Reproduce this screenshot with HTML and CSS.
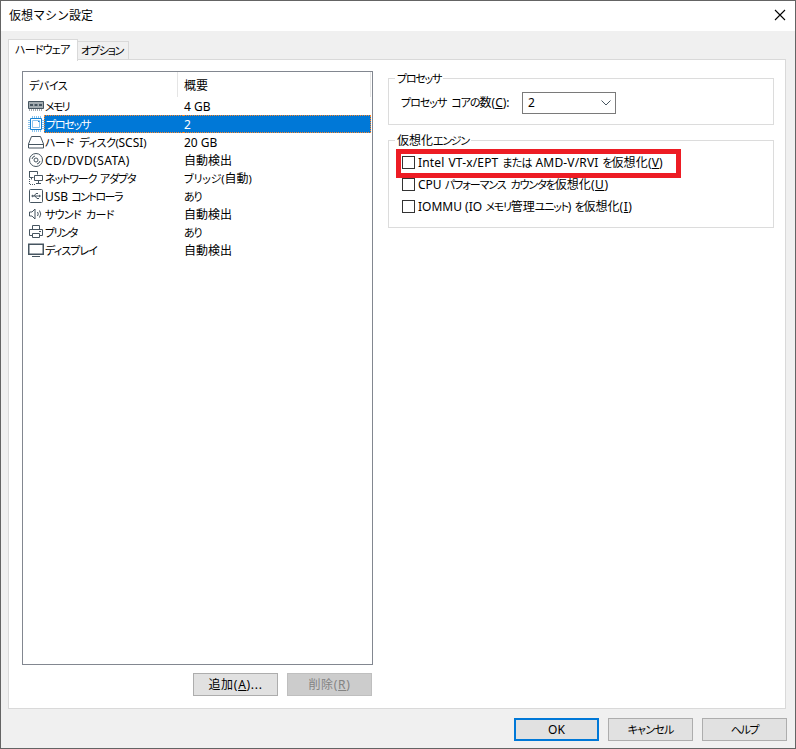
FILE: index.html
```html
<!DOCTYPE html>
<html lang="ja">
<head>
<meta charset="utf-8">
<title>仮想マシン設定</title>
<link rel="stylesheet" href="styles.css">
</head>
<body>
<div class="window">
  <header class="titlebar"><h1 class="title">仮想マシン設定</h1>
    <svg class="close" width="12" height="12" viewBox="0 0 12 12"><path d="M1 1L11 11M11 1L1 11"/></svg>
  </header>
  <nav class="tabs"><div class="tab active kana wide">ハードウェア</div><div class="tab kana">オプション</div></nav>
  <main class="panel">
    <section class="devices">
      <div class="list">
        <div class="head"><span class="kana airy">デバイス</span><span class="summary-head">概要</span></div>
        <div class="row"><svg class="icon" viewBox="0 0 16 16"><path class="fill" d="M.5 3.500h15v7H.5z"/><path class="chip" d="M2 6h3v2H2zM6.500 6h3v2h-3zM11 6h3v2h-3z"/><path class="dash" d="M1 12h14"/></svg><span class="name kana tight">メモリ</span><span class="value">4 GB</span></div>
        <div class="row selected"><svg class="icon cpu" viewBox="0 0 16 16"><path d="M2.500 2.500h11v11h-11z"/><path class="pins" d="M4.500 0v2M6.500 0v2M8.500 0v2M10.500 0v2M12.500 0v2M4.500 14v2M6.500 14v2M8.500 14v2M10.500 14v2M12.500 14v2M0 4.500h2M0 6.500h2M0 8.500h2M0 10.500h2M0 12.500h2M14 4.500h2M14 6.500h2M14 8.500h2M14 10.500h2M14 12.500h2M4.500 4.500h7v7h-7z"/><path d="M10 5.500h1.500"/></svg><span class="name kana">プロセッサ</span><span class="value">2</span></div>
        <div class="row"><svg class="icon" viewBox="0 0 16 16"><path d="M3.500 2.500h9l3 7.500v4H.5v-4zM.5 10.500h15"/></svg><span class="name kana disk">ハード ディスク(<i>SCSI</i>)</span><span class="value">20 GB</span></div>
        <div class="row"><svg class="icon" viewBox="0 0 16 16"><circle cx="8" cy="8" r="6.500"/><circle cx="8" cy="8" r="2"/><path d="M4 7a4 4 0 0 1 3-3M12 9a4 4 0 0 1-3 3"/></svg><span class="name sata">CD/DVD(SATA)</span><span class="value">自動検出</span></div>
        <div class="row"><svg class="icon" viewBox="0 0 16 16"><path d="M1.500 1.500h8v3M1.500 1v6.500h4M3.500 7.500v2M6.500 5.500h8v5h-8zM10.500 11v3M8 13.500h5"/><path class="dash" d="M1.500 9v5.500h6"/></svg><span class="name kana net">ネットワーク アダプタ</span><span class="value kana bridge">ブリッジ(<b>自動</b>)</span></div>
        <div class="row"><svg class="icon" viewBox="0 0 16 16"><rect x="1.500" y="1.500" width="13" height="13" rx="1"/><path d="M4 8h8M6 8l2-2.500h2M7 8l2 2.500h2M11 7l1.500 1-1.500 1"/><circle cx="4.500" cy="8" r=".7"/></svg><span class="name usb">USB <span class="kana">コントローラ</span></span><span class="value kana">あり</span></div>
        <div class="row"><svg class="icon" viewBox="0 0 16 16"><path d="M1.500 6v4h2.500l3 3V3L4 6zM9.500 6q1.500 2 0 4M11.500 4.500q2.500 3.500 0 7"/></svg><span class="name kana sound">サウンド カード</span><span class="value">自動検出</span></div>
        <div class="row"><svg class="icon" viewBox="0 0 16 16"><path d="M4.500 5V1.500h7V5M4 11.500H1.500v-6h13v6H12M4.500 9.500h7v4h-7zM11 7.500h2"/></svg><span class="name kana tight">プリンタ</span><span class="value kana">あり</span></div>
        <div class="row"><svg class="icon" viewBox="0 0 16 16"><path d="M.75 2.250h14.500v10H.75z" stroke-width="1.500"/><path d="M4 14.500h8"/></svg><span class="name kana display">ディスプレイ</span><span class="value">自動検出</span></div>
      </div>
      <div class="list-actions"><button class="add">追加(<u>A</u>)...</button><button disabled>削除(<u>R</u>)</button></div>
    </section>
    <section class="settings">
      <div class="group processors"><h2 class="legend kana">プロセッサ</h2>
        <label class="cores"><span class="kana core-name">プロセッサ コアの</span>数(<u>C</u>):</label>
        <div class="combo">2<svg width="10" height="6" viewBox="0 0 10 6"><path d="M.5.500L5 5 9.500.500"/></svg></div>
      </div>
      <div class="group engine"><h2 class="legend">仮想化<span class="kana">エンジン</span></h2>
        <div class="highlight"></div>
        <div class="check"><span class="box"></span><span class="vtx">Intel VT-x/EPT <span class="kana wide">または</span> AMD-V/RVI <span class="kana">を</span>仮想化(<u>V</u>)</span></div>
        <div class="check"><span class="box"></span><span>CPU <span class="kana counter">パフォーマンス カウンタを</span>仮想化<span class="mnemonic">(<u>U</u>)</span></span></div>
        <div class="check"><span class="box"></span><span class="iommu">IOMMU (IO <span class="kana tight">メモリ</span>管理<span class="kana">ユニット</span>) <span class="kana">を</span>仮想化<span class="mnemonic">(<u>I</u>)</span></span></div>
      </div>
    </section>
  </main>
  <footer class="footer"><button class="default">OK</button><button class="kana wide">キャンセル</button><button class="kana">ヘルプ</button></footer>
</div>
</body>
</html>
```
FILE: styles.css
```css
* { box-sizing: border-box; }
body { margin: 0; background: #fff; color: #000; font: 12px/18px "Noto Sans", "Noto Sans CJK JP", sans-serif; white-space: nowrap; }
h1, h2 { margin: 0; font: inherit; }
i, b { font-style: normal; font-weight: normal; font-size: 12px; letter-spacing: 0; }
svg { fill: none; stroke: #465560; flex: none; }
.kana { font-feature-settings: "palt"; font-size: 11px; letter-spacing: -1.25px; }
.wide { letter-spacing: -.8px; }
.airy { letter-spacing: -.4px; }
.tight { letter-spacing: -1.7px; }
.disk { letter-spacing: -.4px; word-spacing: 3px; }
.net { letter-spacing: -1.15px; word-spacing: 2px; }
.sound { letter-spacing: -.7px; word-spacing: 3px; }
.core-name { letter-spacing: -1px; word-spacing: 3px; }
.display { letter-spacing: -.9px; }
.bridge { letter-spacing: -.2px; }
.usb .kana { letter-spacing: -1.5px; }
.counter { letter-spacing: -1.05px; word-spacing: 3px; }
.sata { letter-spacing: .45px; }
.vtx { letter-spacing: .17px; word-spacing: .6px; }
.iommu .tight { letter-spacing: -1.2px; }
.mnemonic { letter-spacing: .6px; }
.window { width: 796px; height: 749px; border: 1px solid #646464; background: #f0f0f0; display: flex; flex-direction: column; }
.titlebar { height: 30px; flex: none; background: #fff; display: flex; justify-content: space-between; align-items: center; padding: 0 9px 2px 8px; }
.title { padding-top: 2px; }
.close { stroke: #000; stroke-width: 1.1; }
.tabs { height: 29px; flex: none; margin: 0 7px; padding-top: 7px; display: flex; align-items: flex-end; z-index: 1; }
.tab { height: 19px; width: 51px; border: 1px solid #d9d9d9; border-bottom: 0; border-left: 0; padding-left: 3px; line-height: 18px; }
.tab.active { width: 70px; height: 22px; background: #fff; border-left: 1px solid #d9d9d9; padding-left: 6px; margin-bottom: -1px; line-height: 19px; }
.panel { width: 778px; height: 650px; margin: -1px 0 0 7px; border: 1px solid #d9d9d9; background: #fff; flex: none; display: flex; padding: 11px 11px 0 13px; gap: 15px; }
.devices { width: 351px; }
.list { height: 594px; border: 1px solid #828790; padding: 0 1px; }
.head { display: flex; height: 25px; border-right: 1px solid #e5e5e5; padding-left: 5px; line-height: 28px; }
.head .kana { width: 149px; border-right: 1px solid #e5e5e5; }
.summary-head { padding-left: 6px; }
.row { display: flex; height: 18px; line-height: 20px; padding-left: 4px; }
.icon { width: 16px; height: 16px; margin-top: 1px; }
.dash { stroke-dasharray: 1 1; }
.fill { fill: #a4adb2; }
.chip { fill: #465560; stroke: none; }
.cpu { stroke: #1683d3; }
.pins { stroke: #8cc4ed; }
.name { width: 139px; padding-left: 1px; flex: none; }
.value { flex: 1; padding-left: 1px; }
.selected .name, .selected .value { background: #0078d7; color: #fff; border: 1px dotted #ff8728; line-height: 18px; }
.selected .name { padding-left: 1px; border-right: 0; }
.selected .value { border-left: 0; }
.list-actions { display: flex; gap: 9px; justify-content: flex-end; margin: 8px 1px 0 0; }
.list-actions button { letter-spacing: .7px; }
button { width: 85px; height: 23px; padding: 0; border: 1px solid #adadad; background: #e1e1e1; color: #000; font: inherit; }
button.kana { font-size: 11px; }
button:disabled { color: #838383; background: #ccc; border-color: #bfbfbf; }
.default { border: 2px solid #0078d7; }
.settings { width: 386px; padding-top: 7px; }
.group { border: 1px solid #dcdcdc; position: relative; }
.processors { height: 47px; display: flex; padding: 13px 0 0 12px; }
.engine { height: 88px; margin-top: 15px; padding: 11px 0 0 13px; }
.legend { position: absolute; top: -9px; left: 6px; padding: 0 2px; background: #fff; }
.legend.kana { font-size: 11px; }
.cores { width: 121px; line-height: 22px; }
.combo { width: 94px; height: 22px; border: 1px solid #7a7a7a; padding: 0 4px 0 5px; display: flex; align-items: center; justify-content: space-between; }
.check { display: flex; height: 22px; gap: 3px; align-items: center; position: relative; }
.box { width: 13px; height: 13px; margin-bottom: 2px; border: 1px solid #333; background: #fff; }
.highlight { position: absolute; left: 7px; top: 8px; width: 285px; height: 29px; border: 5px solid #ed1c24; }
.footer { display: flex; justify-content: flex-end; gap: 9px; padding: 9px 8px 0 0; }
```
